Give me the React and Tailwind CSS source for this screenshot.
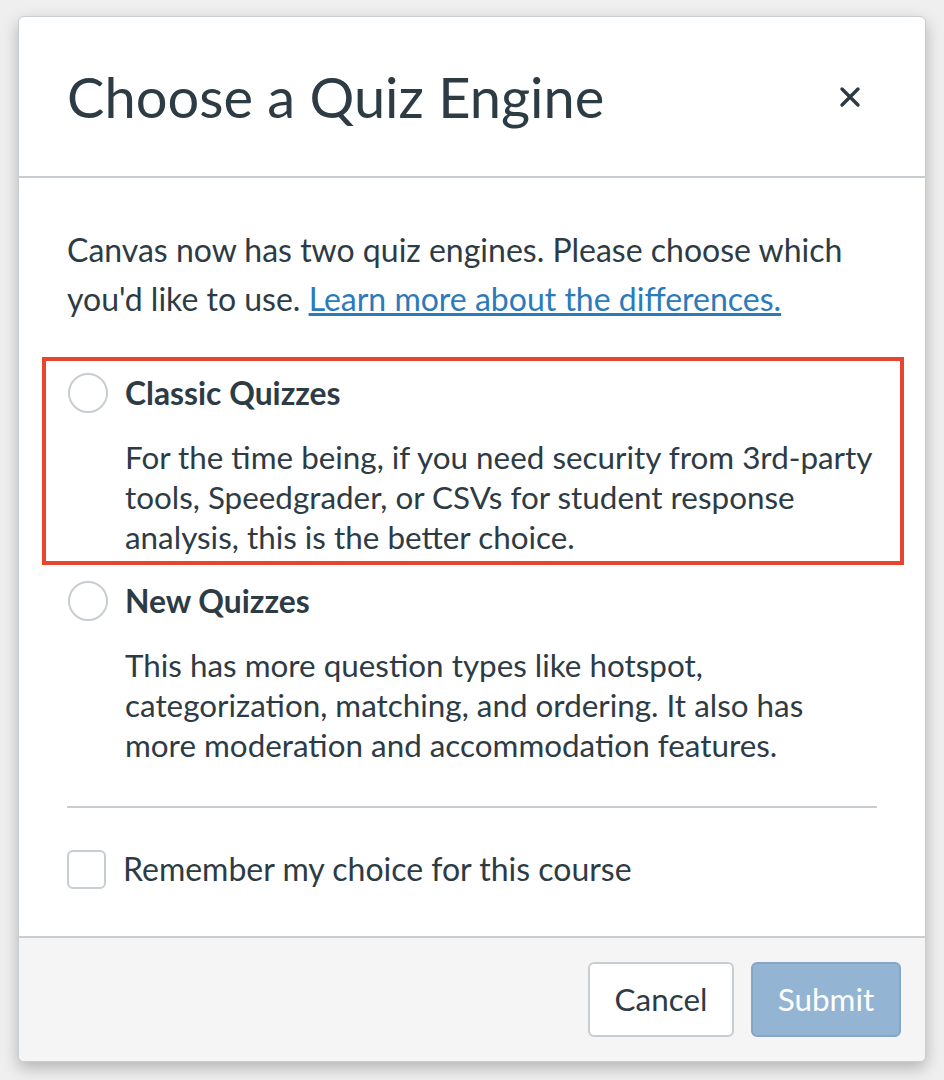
import { useState } from "react";

function Radio({ checked, onClick }) {
    return (
        <button
            onClick={onClick}
            className="w-[40px] h-[40px] shrink-0 rounded-full border-2 border-[#c7cdd1] bg-white flex items-center justify-center"
        >
            {checked && <span className="w-[20px] h-[20px] rounded-full bg-[#2d3b45]" />}
        </button>
    );
}

function Option({ title, text, checked, onClick }) {
    return (
        <div>
            <div className="flex items-center gap-[17px] h-[40px]">
                <Radio checked={checked} onClick={onClick} />
                <span className="font-bold text-[31.8px] leading-[40px]">{title}</span>
            </div>
            <p className="mt-[24px] pl-[57px] text-[31.4px] leading-[40px]">{text}</p>
        </div>
    );
}

export default function App() {
    const [engine, setEngine] = useState("");
    const [remember, setRemember] = useState(false);

    return (
        <div
            className="min-h-[1080px] bg-[#efefef] pt-[16px] pl-[18px] text-[#2d3b45]"
            style={{ fontFamily: "Lato, 'Noto Sans', sans-serif" }}
        >
            <div className="w-[908px] h-[1046px] bg-white rounded-[6px] border border-[#c7cdd1] shadow-[0_6px_16px_rgba(0,0,0,0.25)] flex flex-col overflow-hidden">
                {/* header */}
                <div className="h-[161px] shrink-0 border-b-2 border-[#c7cdd1] flex items-center justify-between pl-[48px] pr-[62px]">
                    <h1 className="text-[56px] leading-none font-normal">Choose a Quiz Engine</h1>
                    <button className="w-[26px] h-[26px] flex items-center justify-center">
                        <svg width="22" height="22" viewBox="0 0 22 22">
                            <path d="M3 3 L19 19 M19 3 L3 19" stroke="#2d3b45" strokeWidth="3.4" strokeLinecap="round" />
                        </svg>
                    </button>
                </div>

                {/* body */}
                <div className="flex-1 px-[48px] pt-[47px]">
                    <p className="text-[32px] leading-[49px]">
                        Canvas now has two quiz engines. Please choose which you'd like to use.{" "}
                        <a href="#" className="text-[#2b7abc] underline">Learn more about the differences.</a>
                    </p>

                    {/* highlighted option */}
                    <div className="mt-[34px] -ml-[25px] -mr-[27px] border-4 border-[#e9442d] pl-[22px] pr-[4px] pt-[12px] pb-[4px]">
                        <Option
                            title="Classic Quizzes"
                            text="For the time being, if you need security from 3rd-party tools, Speedgrader, or CSVs for student response analysis, this is the better choice."
                            checked={engine === "classic"}
                            onClick={() => setEngine("classic")}
                        />
                    </div>

                    <div className="mt-[16px] pl-[1px]">
                        <Option
                            title="New Quizzes"
                            text="This has more question types like hotspot, categorization, matching, and ordering. It also has more moderation and accommodation features."
                            checked={engine === "new"}
                            onClick={() => setEngine("new")}
                        />
                    </div>

                    <div className="mt-[41px] border-t-2 border-[#c7cdd1]" />

                    <label className="mt-[41px] flex items-center gap-[17px] cursor-pointer">
                        <span
                            onClick={() => setRemember(!remember)}
                            className="w-[39px] h-[39px] rounded-[6px] border-2 border-[#c7cdd1] bg-white flex items-center justify-center"
                        >
                            {remember && (
                                <svg width="20" height="20" viewBox="0 0 20 20">
                                    <path d="M3 10 L8 15 L17 4" stroke="#2d3b45" strokeWidth="3" fill="none" />
                                </svg>
                            )}
                        </span>
                        <span className="text-[32px] leading-[40px]">Remember my choice for this course</span>
                    </label>
                </div>

                {/* footer */}
                <div className="h-[125px] shrink-0 border-t-2 border-[#c7cdd1] bg-[#f5f5f5] flex items-center justify-end gap-[17px] pr-[24px]">
                    <button className="w-[146px] h-[75px] rounded-[6px] border-2 border-[#c7cdd1] bg-white text-[31.4px] text-[#2d3b45]">
                        Cancel
                    </button>
                    <button className="w-[150px] h-[75px] rounded-[6px] border-2 border-[#85a6c6] bg-[#94b4d4] text-[31.4px] text-white">
                        Submit
                    </button>
                </div>
            </div>
        </div>
    );
}
